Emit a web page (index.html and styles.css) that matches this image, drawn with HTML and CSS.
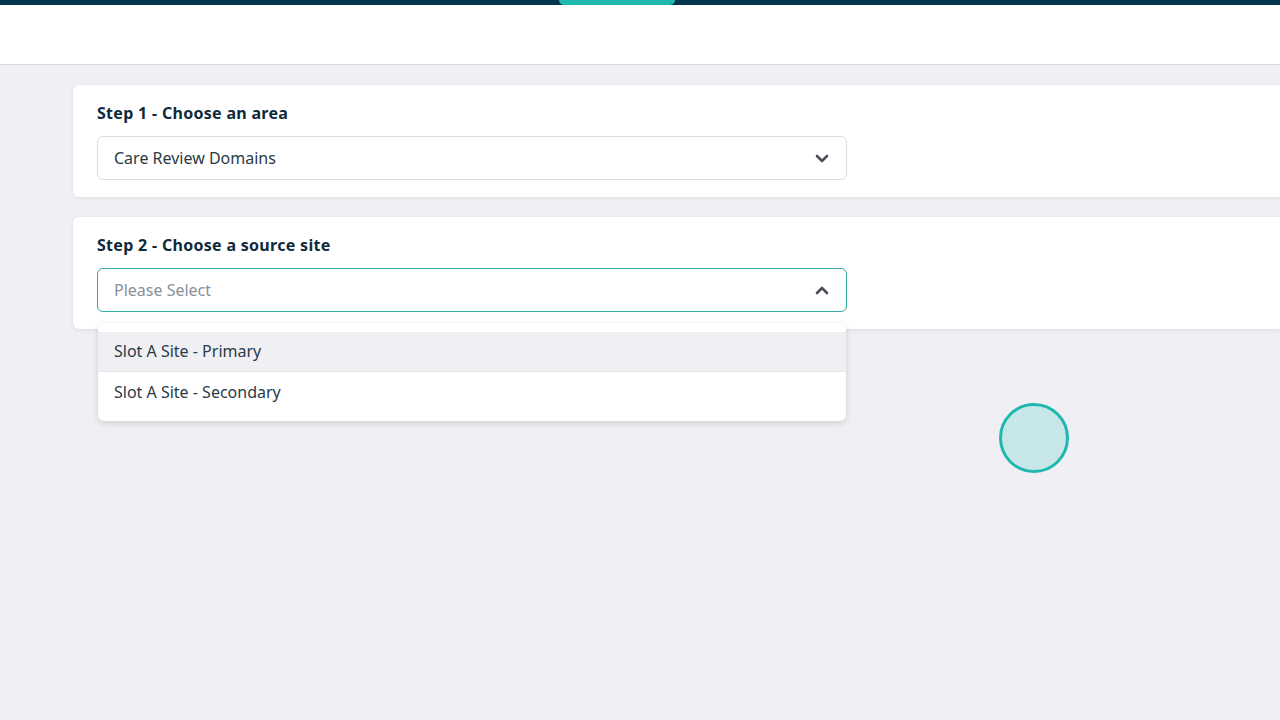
FILE: index.html
```html
<!DOCTYPE html>
<html lang="en">
<head>
    <meta charset="UTF-8">
    <meta name="viewport" content="width=device-width, initial-scale=1.0">
    <title>Choose Source Site</title>
    <link rel="stylesheet" href="styles.css">
</head>
<body>
    <div class="top-bar">
        <div class="top-tab"></div>
    </div>
    <header class="header"></header>
    <main class="content">
        <section class="step-card">
            <h2 class="step-title">Step 1 - Choose an area</h2>
            <div class="select">
                <span class="select-value">Care Review Domains</span>
                <svg class="chevron" width="14" height="9" viewBox="0 0 14 9"><path d="M2 2l5 5 5-5" fill="none" stroke="#4a4f55" stroke-width="2.6" stroke-linecap="round" stroke-linejoin="round"/></svg>
            </div>
        </section>
        <section class="step-card">
            <h2 class="step-title">Step 2 - Choose a source site</h2>
            <div class="select-wrap">
                <div class="select open">
                    <span class="select-placeholder">Please Select</span>
                    <svg class="chevron" width="14" height="9" viewBox="0 0 14 9"><path d="M2 7l5-5 5 5" fill="none" stroke="#4a4f55" stroke-width="2.6" stroke-linecap="round" stroke-linejoin="round"/></svg>
                </div>
                <ul class="dropdown">
                    <li class="option hovered">Slot A Site - Primary</li>
                    <li class="option">Slot A Site - Secondary</li>
                </ul>
            </div>
        </section>
    </main>
    <div class="cursor-dot"></div>
</body>
</html>
```

FILE: styles.css
```css
body {
    margin: 0;
    padding: 0;
    min-height: 100vh;
    background-color: #f0f0f4;
    font-family: "Noto Sans", "Open Sans", sans-serif;
    color: #1c2e3a;
}

.top-bar {
    height: 5px;
    background-color: #04344f;
    position: relative;
}

.top-tab {
    position: absolute;
    left: 559px;
    top: 0;
    width: 116px;
    height: 5px;
    background-color: #1fb8ae;
    border-radius: 0 0 6px 6px;
}

.header {
    height: 59px;
    background-color: #fff;
    border-bottom: 1px solid #d8d8de;
}

.content {
    padding: 20px 0 0 73px;
    display: flex;
    flex-direction: column;
    gap: 20px;
}

.step-card {
    background-color: #fff;
    border-radius: 6px 0 0 6px;
    box-shadow: 0 1px 4px rgba(0,0,0,0.08);
    padding: 17px 24px 17px;
}

.step-title {
    margin: 0 0 12px;
    font-size: 16px;
    font-weight: 700;
    line-height: 22px;
    letter-spacing: 0.3px;
    color: #0e2a3b;
}

.select-wrap {
    position: relative;
    width: 750px;
    z-index: 2;
}

.select {
    width: 750px;
    height: 44px;
    box-sizing: border-box;
    border: 1px solid #dcdce0;
    border-radius: 6px;
    display: flex;
    align-items: center;
    justify-content: space-between;
    padding: 0 17px 0 16px;
    font-size: 16px;
}

.select.open {
    border-color: #2fa9a2;
}

.select-value {
    color: #2a3a45;
}

.select-placeholder {
    color: #8b9099;
}

.dropdown {
    position: absolute;
    left: 1px;
    top: 55px;
    width: 748px;
    margin: 0;
    padding: 9px 0;
    list-style: none;
    background-color: #fff;
    border-radius: 6px;
    box-shadow: 0 2px 6px rgba(0,0,0,0.15);
}

.option {
    height: 40px;
    line-height: 40px;
    padding: 0 16px;
    font-size: 16px;
    color: #2a3a45;
}

.option.hovered {
    background-color: #f0f0f4;
    border-bottom: 1px solid #e6e6ea;
    height: 39px;
    line-height: 39px;
}

.cursor-dot {
    position: absolute;
    left: 999px;
    top: 403px;
    width: 64px;
    height: 64px;
    border: 3px solid #1fb8ae;
    border-radius: 50%;
    background-color: #c6e6e8;
}
```
